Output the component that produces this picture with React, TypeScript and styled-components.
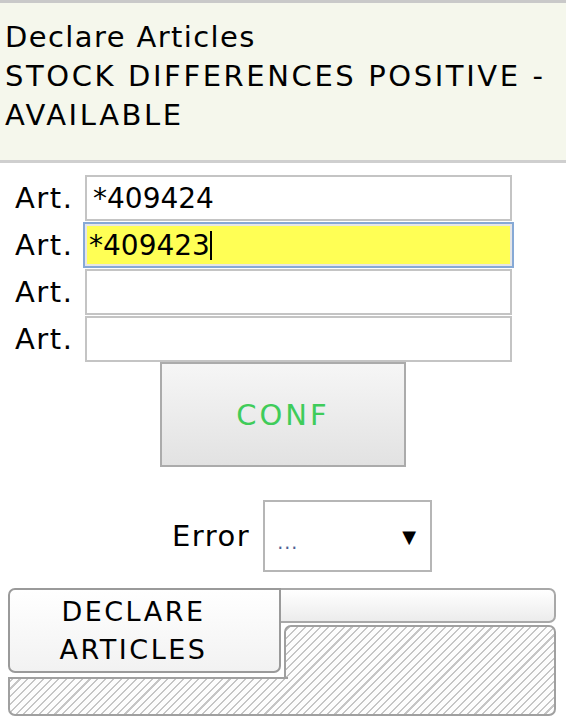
import * as React from 'react';
import styled, { createGlobalStyle } from 'styled-components';

const GlobalStyle = createGlobalStyle`
  html, body {
    margin: 0;
    padding: 0;
    background: #ffffff;
  }
  body {
    font-family: "DejaVu Sans", Verdana, sans-serif;
    color: #000;
  }
`;

export const Page = styled.div`
  width: 566px;
  display: flex;
  flex-direction: column;
`;

export const Header = styled.div`
  background: #f5f7ec;
  border-top: 3px solid #c9c9c9;
  border-bottom: 3px solid #cfcfcf;
  padding: 15px 5px 25px 5px;
`;

export const TitleLine = styled.div<{ $caps?: boolean }>`
  font-size: 29px;
  line-height: 39px;
  letter-spacing: ${(p) => (p.$caps ? '2.6px' : '1.4px')};
  white-space: nowrap;
`;

export const Form = styled.div`
  display: flex;
  flex-direction: column;
  gap: 1px;
  padding: 12px 0 0 15px;
`;

export const Row = styled.div`
  display: flex;
  align-items: center;
`;

export const Label = styled.span`
  width: 70px;
  font-size: 29px;
  letter-spacing: 1.5px;
`;

export const Field = styled.div<{ $focused?: boolean }>`
  box-sizing: border-box;
  height: 46px;
  display: flex;
  align-items: center;
  padding-left: ${(p) => (p.$focused ? '4px' : '6px')};
  font-size: 28px;
  background: ${(p) => (p.$focused ? '#ffff55' : '#ffffff')};
  border: ${(p) => (p.$focused ? '2px solid #86a9d6' : '2px solid #c4c4c4')};
  box-shadow: ${(p) => (p.$focused ? 'inset 0 0 0 2px #e6e6e6' : 'none')};
  margin-left: ${(p) => (p.$focused ? '-2px' : '0')};
  width: ${(p) => (p.$focused ? '431px' : '427px')};
`;

export const Caret = styled.span`
  display: inline-block;
  width: 2px;
  height: 29px;
  background: #000;
`;

export const ButtonRow = styled.div`
  display: flex;
  justify-content: center;
`;

export const ConfButton = styled.button`
  box-sizing: border-box;
  width: 246px;
  height: 105px;
  border: 2px solid #ababab;
  background: linear-gradient(#f6f6f6, #e2e2e2);
  color: #3fcc5a;
  font-family: "DejaVu Sans", Verdana, sans-serif;
  font-size: 29px;
  letter-spacing: 3px;
  padding: 0;
`;

export const ErrorRow = styled.div`
  display: flex;
  align-items: center;
  gap: 13px;
  padding-left: 172px;
  margin-top: 33px;
`;

export const ErrorLabel = styled.span`
  font-size: 29px;
  letter-spacing: 1.5px;
`;

export const SelectBox = styled.div`
  box-sizing: border-box;
  width: 169px;
  height: 72px;
  border: 2px solid #b6b6b6;
  display: flex;
  align-items: center;
  justify-content: space-between;
  padding: 0 14px 0 12px;
`;

export const SelectValue = styled.span`
  font-size: 19px;
  letter-spacing: 1px;
  color: #4f5f92;
  margin-top: 12px;
`;

export const SelectArrow = styled.span`
  font-size: 18px;
  color: #000;
`;

export const Tabs = styled.div`
  display: flex;
  margin: 16px 10px 0 8px;
  height: 128px;
`;

export const LeftCol = styled.div`
  width: 276px;
  display: flex;
  flex-direction: column;
  gap: 4px;
  position: relative;
  z-index: 2;
`;

export const RightCol = styled.div`
  flex: 1;
  display: flex;
  flex-direction: column;
  gap: 2px;
`;

const hatch = `
  background-color: #fdfdfd;
  background-image: repeating-linear-gradient(135deg, transparent 0 4px, #c6c6c6 4px 5.5px);
  background-attachment: fixed;
`;

export const Tab = styled.div`
  box-sizing: border-box;
  height: 85px;
  margin-right: 3px;
  border: 2px solid #9a9a9a;
  border-radius: 7px 0 7px 7px;
  background: linear-gradient(#ffffff, #f2f2f2);
  display: flex;
  align-items: center;
  justify-content: center;
  text-align: center;
  padding: 0 22px 0 0;
  font-size: 27px;
  line-height: 38px;
  letter-spacing: 2.5px;
`;

export const TabText = styled.span`
  width: 170px;
`;

export const HatchStrip = styled.div`
  flex: 1;
  box-sizing: border-box;
  border: 2px solid #a0a0a0;
  border-right: none;
  border-radius: 0 0 0 7px;
  margin-right: -4px;
  ${hatch}
`;

export const TopStrip = styled.div`
  box-sizing: border-box;
  height: 35px;
  margin-left: -12px;
  border: 2px solid #a8a8a8;
  border-left: none;
  border-radius: 0 7px 7px 0;
  background: linear-gradient(#ffffff, #ececec);
`;

export const HatchPanel = styled.div`
  flex: 1;
  box-sizing: border-box;
  border: 2px solid #a0a0a0;
  border-radius: 7px 7px 7px 0;
  ${hatch}
`;

const articles = ['*409424', '*409423', '', ''];

export default function App() {
  return (
    <Page>
      <GlobalStyle />
      <Header>
        <TitleLine>Declare Articles</TitleLine>
        <TitleLine $caps>STOCK DIFFERENCES POSITIVE -</TitleLine>
        <TitleLine $caps>AVAILABLE</TitleLine>
      </Header>
      <Form>
        {articles.map((value, i) => (
          <Row key={i}>
            <Label>Art.</Label>
            <Field $focused={i === 1}>
              {value}
              {i === 1 && <Caret />}
            </Field>
          </Row>
        ))}
      </Form>
      <ButtonRow>
        <ConfButton>CONF</ConfButton>
      </ButtonRow>
      <ErrorRow>
        <ErrorLabel>Error</ErrorLabel>
        <SelectBox>
          <SelectValue>...</SelectValue>
          <SelectArrow>▼</SelectArrow>
        </SelectBox>
      </ErrorRow>
      <Tabs>
        <LeftCol>
          <Tab>
            <TabText>DECLARE ARTICLES</TabText>
          </Tab>
          <HatchStrip />
        </LeftCol>
        <RightCol>
          <TopStrip />
          <HatchPanel />
        </RightCol>
      </Tabs>
    </Page>
  );
}
